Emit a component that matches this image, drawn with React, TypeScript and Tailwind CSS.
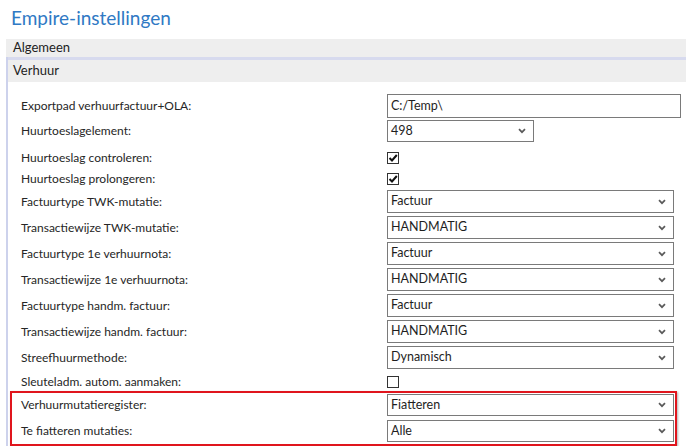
import React from 'react';

const FONT = "font-['Segoe_UI','Lato','Open_Sans',sans-serif]";

function Chevron() {
  return (
    <svg width="8" height="6" viewBox="0 0 8 6" className="absolute right-[7px] top-1/2 -translate-y-1/2">
      <path d="M1 1.2 L4 4.2 L7 1.2" fill="none" stroke="#5a5a5a" strokeWidth="1.7" />
    </svg>
  );
}

function Select({ value, wide = true, h = 'h-[23px]' }: { value: string; wide?: boolean; h?: string }) {
  return (
    <div className={`relative flex items-center border border-[#7a7a7a] bg-white pl-[3px] text-[12.5px] text-[#1e1e1e] ${h} ${wide ? 'w-[287px]' : 'w-[147px]'}`}>
      {value}
      <Chevron />
    </div>
  );
}

function Checkbox({ checked }: { checked: boolean }) {
  return (
    <div className="relative h-[12px] w-[12px] border border-[#333] bg-white">
      {checked && (
        <svg width="10" height="10" viewBox="0 0 10 10" className="absolute left-0 top-0">
          <path d="M1.5 5 L4 7.5 L8.8 2" fill="none" stroke="#111" strokeWidth="2" />
        </svg>
      )}
    </div>
  );
}

function Row({ label, children, className = '' }: { label: string; children: React.ReactNode; className?: string }) {
  return (
    <div className={`flex items-center ${className}`}>
      <div className="w-[366px] text-[12px] text-[#262626] leading-none">{label}</div>
      {children}
    </div>
  );
}

export default function App() {
  return (
    <div className={`h-[446px] w-[686px] overflow-hidden bg-white ${FONT}`}>
      <div className="h-[39px] pl-[11px] pt-[4px] text-[19px] text-[#2f79c4] leading-[28px]">Empire-instellingen</div>

      <div className="ml-[6px] flex h-[18px] items-center bg-[#eeeeee] pl-[7px] text-[13px] text-[#222]">Algemeen</div>

      <div className="ml-[6px] border-l-2 border-[#cdd2ec]">
        <div className="h-[3px] bg-[#d7daee]" />
        <div className="flex h-[22px] items-center bg-[#eeeeee] pl-[5px] text-[13px] text-[#222]">Verhuur</div>

        <div className="flex flex-col pl-[13px]">
          <Row label="Exportpad verhuurfactuur+OLA:" className="mt-[12px] h-[24px]">
            <div className="flex h-[24px] w-[294px] items-center border border-[#7a7a7a] pl-[3px] text-[12.5px] text-[#1e1e1e]">C:/Temp\</div>
          </Row>
          <Row label="Huurtoeslagelement:" className="mt-[2px] h-[22px]">
            <Select value="498" wide={false} h="h-[22px]" />
          </Row>
          <Row label="Huurtoeslag controleren:" className="mt-[10px] h-[11px]">
            <Checkbox checked />
          </Row>
          <Row label="Huurtoeslag prolongeren:" className="mt-[10px] h-[11px]">
            <Checkbox checked />
          </Row>
          <Row label="Factuurtype TWK-mutatie:" className="mt-[6px] h-[23px]">
            <Select value="Factuur" />
          </Row>
          <Row label="Transactiewijze TWK-mutatie:" className="mt-[3px] h-[23px]">
            <Select value="HANDMATIG" />
          </Row>
          <Row label="Factuurtype 1e verhuurnota:" className="mt-[3px] h-[23px]">
            <Select value="Factuur" />
          </Row>
          <Row label="Transactiewijze 1e verhuurnota:" className="mt-[3px] h-[23px]">
            <Select value="HANDMATIG" />
          </Row>
          <Row label="Factuurtype handm. factuur:" className="mt-[3px] h-[23px]">
            <Select value="Factuur" />
          </Row>
          <Row label="Transactiewijze handm. factuur:" className="mt-[3px] h-[23px]">
            <Select value="HANDMATIG" />
          </Row>
          <Row label="Streefhuurmethode:" className="mt-[3px] h-[23px]">
            <Select value="Dynamisch" />
          </Row>
          <Row label="Sleuteladm. autom. aanmaken:" className="mt-[7px] h-[12px]">
            <Checkbox checked={false} />
          </Row>
        </div>

        <div className="ml-[2px] mt-[3px] w-[667px] border-2 border-[#e0151d] pb-[2px] pl-[9px] pt-[1px] shadow-[1px_1px_2px_rgba(0,0,0,0.3)]">
          <Row label="Verhuurmutatieregister:" className="h-[22px]">
            <Select value="Fiatteren" h="h-[22px]" />
          </Row>
          <Row label="Te fiatteren mutaties:" className="mt-[4px] h-[22px]">
            <Select value="Alle" h="h-[22px]" />
          </Row>
        </div>
      </div>
    </div>
  );
}
